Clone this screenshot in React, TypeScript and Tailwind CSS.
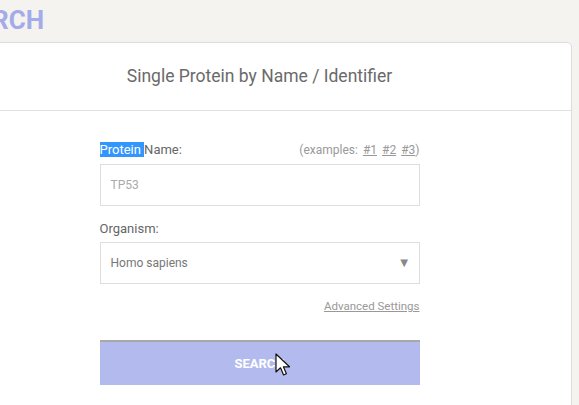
const Cursor = () => (
  <svg
    className="absolute left-[275px] top-[353px] h-[24px] w-[17px]"
    viewBox="0 0 17 24"
    xmlns="http://www.w3.org/2000/svg"
  >
    <path
      d="M1 1 L1 19 L5.5 14.8 L8.6 22 L11.4 20.8 L8.4 13.8 L14.5 13.8 Z"
      fill="#fff"
      stroke="#111"
      strokeWidth={1.2}
      strokeLinejoin="round"
    />
  </svg>
);

export default function App() {
  return (
    <div className="relative h-[405px] w-[579px] overflow-hidden bg-[#f4f3f0] font-['Roboto',sans-serif]">
      <div className="ml-[-56px] pt-[3px] text-[26px] font-bold leading-[34px] text-[#a4abe9]">SEARCH</div>

      <div className="ml-[-53px] mt-[5px] w-[625px] rounded-[5px] border border-[#dcdcdc] bg-white">
        <div className="flex h-[68px] items-center justify-center border-b border-[#e2e2e2] text-[17.5px] text-[#6a6a6a]">
          Single Protein by Name / Identifier
        </div>

        <div className="mx-auto w-[320px] pt-[31px]">
          <div className="flex items-center justify-between text-[13px] leading-[16px] text-[#666]">
            <span>
              <span className="bg-[#3296fd] text-white">Protein&nbsp;</span>Name:
            </span>
            <span className="text-[12px] text-[#999]">
              (examples: <span className="ml-[2px] underline">#1</span>{" "}
              <span className="ml-[2px] underline">#2</span>{" "}
              <span className="ml-[2px] underline">#3</span>)
            </span>
          </div>
          <div className="mt-[6px] flex h-[42px] items-center border border-[#dedede] px-[10px] text-[12px] text-[#aaa]">
            TP53
          </div>

          <div className="mt-[15px] text-[13px] leading-[16px] text-[#666]">Organism:</div>
          <div className="mt-[5px] flex h-[42px] items-center justify-between border border-[#dedede] pl-[10px] pr-[8px] text-[12px] text-[#777]">
            <span>Homo sapiens</span>
            <span className="text-[13px] text-[#888]">▼</span>
          </div>

          <div className="mt-[15px] text-right text-[11.5px] leading-[14px] text-[#999] underline">
            Advanced Settings
          </div>

          <button className="mt-[27px] flex h-[45px] w-full items-center justify-center border-t-2 border-[#a8a8a8] bg-[#b3bbee] text-[13px] font-bold uppercase text-white">
            Search
          </button>
          <div className="h-[40px]" />
        </div>
      </div>
      <Cursor />
    </div>
  );
}
